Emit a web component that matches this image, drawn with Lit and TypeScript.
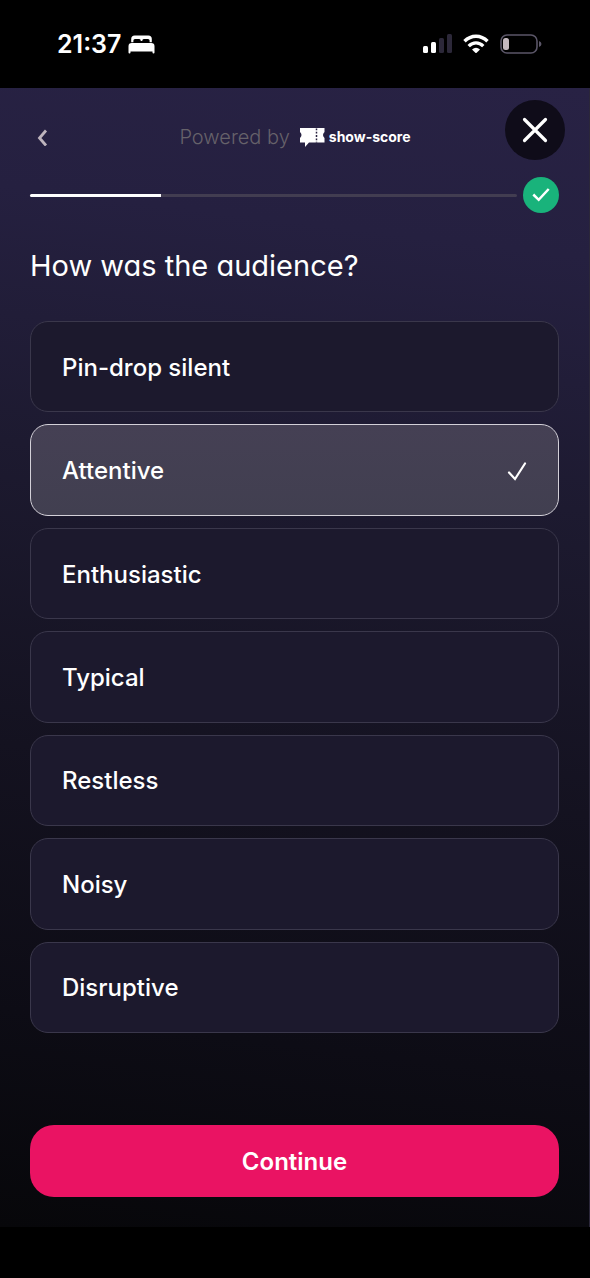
import { LitElement, html, css, svg } from "lit";
import { customElement, property, state } from "lit/decorators.js";

const OPTIONS = [
  "Pin-drop silent",
  "Attentive",
  "Enthusiastic",
  "Typical",
  "Restless",
  "Noisy",
  "Disruptive",
];

@customElement("status-bar")
class StatusBar extends LitElement {
  static styles = css`
    :host {
      display: flex;
      align-items: center;
      justify-content: space-between;
      height: 88px;
      padding: 0 48px 0 57px;
      box-sizing: border-box;
      background: #000;
      color: #fff;
      font: 600 25px/32px Inter, "Liberation Sans", sans-serif;
    }
    .group {
      display: flex;
      align-items: center;
      gap: 7px;
    }
    .icons {
      gap: 11px;
    }
    svg {
      display: block;
    }
  `;

  render() {
    return html`
      <div class="group">
        <span>21:37</span>
        <svg width="27" height="19" viewBox="0 0 27 19" aria-hidden="true">
          <path d="M3.200 7.200V4Q3.200 .5 6.700 .5H20.300Q23.800 .5 23.800 4V7.200H21.600V5.600Q21.600 4 20 4H15.800Q14.300 4 14.300 5.500V6H12.700V5.500Q12.700 4 11.200 4H7Q5.400 4 5.400 5.600V7.200Z" fill="#fff" />
          <path d="M3.800 8H23.200Q26.500 8 26.500 11.300V17.600Q26.500 18.600 25.500 18.600Q24.500 18.600 24.500 17.600V16.400H2.500V17.600Q2.500 18.600 1.500 18.600Q.5 18.600 .5 17.600V11.300Q.5 8 3.800 8Z" fill="#fff" />
        </svg>
      </div>
      <div class="group icons">
        <svg width="29" height="20" viewBox="0 0 29 20" aria-hidden="true">
          <rect x="0" y="12" width="5" height="7" rx="1.500" fill="#fff" />
          <rect x="8" y="8" width="5" height="11" rx="1.500" fill="#fff" />
          <rect x="16" y="4" width="5" height="15" rx="1.500" fill="#2c2839" />
          <rect x="24" y="0" width="5" height="19" rx="1.500" fill="#2c2839" />
        </svg>
        <svg width="26" height="20" viewBox="0 0 26 20" aria-hidden="true">
          <g fill="none" stroke="#fff" stroke-width="3.400">
            <path d="M1.500 7.300Q6.500 2.300 13 2.300T24.500 7.300" />
            <path d="M5.700 12.100Q9 8.900 13 8.900T20.300 12.100" />
          </g>
          <path d="M9 15.400Q13 12 17 15.400L13.700 18.800Q13 19.400 12.300 18.800Z" fill="#fff" />
        </svg>
        <svg width="42" height="20" viewBox="0 0 42 20" aria-hidden="true">
          <rect x="1" y="1" width="36" height="18" rx="6" fill="none" stroke="#5b5668" stroke-width="1.600" />
          <path d="M39 7Q41.500 8 41.500 10T39 13Z" fill="#5b5668" />
          <rect x="3" y="4" width="6" height="12" rx="2.500" fill="#c3b8be" />
        </svg>
      </div>
    `;
  }
}

@customElement("survey-progress")
class SurveyProgress extends LitElement {
  @property({ type: Number }) value = 0;

  static styles = css`
    :host {
      display: flex;
      align-items: center;
      gap: 6px;
    }
    .track {
      flex: 1;
      height: 3px;
      border-radius: 2px;
      background: #423d51;
    }
    .fill {
      height: 100%;
      background: #fff;
      border-radius: 2px 0 0 2px;
    }
    svg {
      display: block;
    }
  `;

  render() {
    return html`
      <div
        class="track"
        role="progressbar"
        aria-label="Survey progress"
        aria-valuenow=${this.value}
        aria-valuemin="0"
        aria-valuemax="100"
      >
        <div class="fill" style="width:${this.value}%"></div>
      </div>
      <svg width="36" height="36" viewBox="0 0 36 36" aria-hidden="true">
        <circle cx="18" cy="18" r="18" fill="#19b37b" />
        <path d="M10.300 17.500L15.700 22.800L25.700 12" fill="none" stroke="#fff" stroke-width="2.500" />
      </svg>
    `;
  }
}

@customElement("app-root")
class AppRoot extends LitElement {
  @state() private selected = "Attentive";

  static styles = css`
    :host {
      display: flex;
      flex-direction: column;
      min-height: 100vh;
      padding-bottom: 51px;
      box-sizing: border-box;
      background: #000;
      color: #fff;
      font-family: Inter, "Liberation Sans", sans-serif;
    }
    main {
      flex: 1;
      display: flex;
      flex-direction: column;
      border-right: 1px solid #2b2739;
      background: linear-gradient(
        187deg,
        #282244 0%,
        #252040 14%,
        #1d1a30 35%,
        #141220 60%,
        #0d0c15 82%,
        #07070a 100%
      );
    }
    button {
      border: 0;
      padding: 0;
      color: inherit;
      font: inherit;
      cursor: pointer;
    }
    svg {
      display: block;
    }
    header {
      display: grid;
      grid-template-columns: 60px 1fr 60px;
      align-items: center;
      height: 86px;
      padding: 12px 24px 0 25px;
      box-sizing: border-box;
    }
    .back {
      display: grid;
      place-items: center;
      width: 34px;
      height: 44px;
      background: none;
    }
    .close {
      display: grid;
      place-items: center;
      align-self: start;
      width: 60px;
      height: 60px;
      border-radius: 50%;
      background: #0f0c19;
    }
    .brand {
      display: flex;
      align-items: center;
      justify-content: center;
      gap: 10px;
    }
    .powered {
      color: #66626a;
      font-size: 20px;
      line-height: 24px;
      font-weight: 300;
      font-feature-settings: "cv11";
    }
    .logo {
      display: flex;
      align-items: center;
      gap: 4px;
      font-size: 14px;
      line-height: 20px;
      font-weight: 700;
    }
    survey-progress {
      margin: 3px 30px 0;
    }
    form {
      flex: 1;
      display: flex;
      flex-direction: column;
      padding: 33px 30px 30px;
    }
    h1 {
      margin: 0 0 35px;
      font-size: 29px;
      line-height: 40px;
      font-weight: 400;
      font-feature-settings: "cv11";
    }
    .options {
      flex: 1;
      display: grid;
      grid-auto-rows: 1fr;
      gap: 12px;
    }
    .option {
      display: flex;
      align-items: center;
      justify-content: space-between;
      padding: 18px 31px 16px;
      border: 1px solid #3a374b;
      border-radius: 18px;
      background: #1c192d;
      font-size: 24px;
      line-height: 32px;
      font-weight: 500;
      cursor: pointer;
    }
    .option:has(input:checked) {
      border-color: #d3d0d8;
      background: linear-gradient(#454054, #413f50);
    }
    .option input {
      appearance: none;
      width: 0;
      height: 0;
      margin: 0;
      order: 1;
    }
    .text {
      flex: 1;
    }
    .continue {
      height: 72px;
      margin-top: 92px;
      padding-top: 2px;
      border-radius: 24px;
      background: #ea1363;
      font-size: 24px;
      line-height: 32px;
      font-weight: 600;
    }
  `;

  private tick = svg`
    <path d="M2 10.500L8 17L18 1.500" fill="none" stroke="#fff" stroke-width="2.200" stroke-linecap="round" />
  `;

  render() {
    return html`
      <status-bar></status-bar>
      <main>
        <header>
          <button class="back" type="button" aria-label="Back">
            <svg width="12" height="18" viewBox="0 0 12 18">
              <path d="M10 2.500L3.500 10L10 17.500" fill="none" stroke="#beb4bd" stroke-width="2.800" />
            </svg>
          </button>
          <div class="brand">
            <span class="powered">Powered by</span>
            <span class="logo">
              <svg width="25" height="20" viewBox="0 0 25 20" aria-hidden="true">
                <path d="M0 1H24.500V5Q21.500 8 24.500 11V15.500H9L5 20V15.500H0V11Q3 8 0 5Z" fill="#fff" />
                <path d="M16.500 1.500V15.500" stroke="#28223f" stroke-width="1.500" stroke-dasharray="1.800 1.500" />
              </svg>
              show-score
            </span>
          </div>
          <button class="close" type="button" aria-label="Close">
            <svg width="26" height="26" viewBox="0 0 26 26">
              <path d="M2.500 2.500L23.500 23.500M23.500 2.500L2.500 23.500" stroke="#fff" stroke-width="3.200" stroke-linecap="round" />
            </svg>
          </button>
        </header>
        <survey-progress value="27"></survey-progress>
        <form @submit=${(e: Event) => e.preventDefault()}>
          <h1 id="question">How was the audience?</h1>
          <div class="options" role="radiogroup" aria-labelledby="question">
            ${OPTIONS.map(
              (name) => html`
                <label class="option">
                  <input
                    type="radio"
                    name="audience"
                    .value=${name}
                    .checked=${this.selected === name}
                    @change=${() => (this.selected = name)}
                  />
                  <span class="text">${name}</span>
                  ${this.selected === name
                    ? html`<svg width="20" height="19" viewBox="0 0 20 19" aria-hidden="true">${this.tick}</svg>`
                    : ""}
                </label>
              `,
            )}
          </div>
          <button class="continue" type="submit">Continue</button>
        </form>
      </main>
    `;
  }
}
